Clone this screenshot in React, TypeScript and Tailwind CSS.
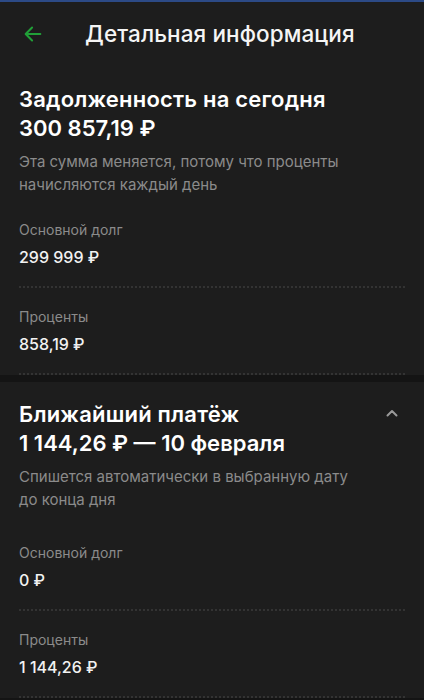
import React from "react";

type Row = { label: string; value: string };

function Dots() {
    return <div className="mx-[19px] border-b-2 border-dotted border-[#333333]" />;
}

function InfoRow({ row }: { row: Row }) {
    return (
        <div>
            <div className="px-[19px] pt-[19px] pb-[19px]">
                <div className="text-[14px] leading-[20px] text-[#8b8b8b]">{row.label}</div>
                <div className="mt-[7px] text-[16px] leading-[20px] font-medium text-[#f2f2f2]">{row.value}</div>
            </div>
            <Dots />
        </div>
    );
}

function Section({
    title,
    amount,
    note,
    rows,
    collapsible,
}: {
    title: string;
    amount: string;
    note: string;
    rows: Row[];
    collapsible?: boolean;
}) {
    return (
        <section className="bg-[#1d1d1d]">
            <div className="relative px-[19px]">
                <h2 className="text-[22px] leading-[29px] font-semibold text-white tracking-[0.2px]">{title}</h2>
                <div className="text-[22px] leading-[29px] font-semibold text-white">{amount}</div>
                <p className={`mt-[7px] pr-[40px] text-[15px] leading-[23px] text-[#8b8b8b] ${collapsible ? "-mt-[1px]" : ""}`}>{note}</p>
                {collapsible && (
                    <svg
                        className="absolute right-[25px] top-[6px]"
                        width="14"
                        height="14"
                        viewBox="0 0 14 14"
                        fill="none"
                        stroke="#9a9a9a"
                        strokeWidth="2"
                        strokeLinecap="round"
                        strokeLinejoin="round"
                    >
                        <path d="M2.5 9.5 7 5l4.5 4.5" />
                    </svg>
                )}
            </div>
            <div className={collapsible ? "mt-[13px]" : "mt-[5px]"}>
                {rows.map((r, i) => (
                    <InfoRow key={i} row={r} />
                ))}
            </div>
        </section>
    );
}

export default function App() {
    return (
        <div className="w-[424px] h-[700px] overflow-hidden bg-[#1d1d1d] font-['Inter',sans-serif]">
            <div className="h-[2px] bg-[#2c4a86]" />
            {/* Header */}
            <header className="flex items-center h-[64px] px-[22px]">
                <svg width="22" height="22" viewBox="0 0 24 24" fill="none" stroke="#21a038" strokeWidth="2.2" strokeLinecap="round" strokeLinejoin="round">
                    <path d="M20 12H5" />
                    <path d="M11 5l-7 7 7 7" />
                </svg>
                <h1 className="ml-[41px] text-[22.5px] font-medium text-[#f5f5f5] tracking-[0.1px]">Детальная информация</h1>
            </header>

            <div className="pt-[19px]">
                <Section
                    title="Задолженность на сегодня"
                    amount="300 857,19 ₽"
                    note="Эта сумма меняется, потому что проценты начисляются каждый день"
                    rows={[
                        { label: "Основной долг", value: "299 999 ₽" },
                        { label: "Проценты", value: "858,19 ₽" },
                    ]}
                />
                <div className="h-[7px] bg-[#141414]" />
                <div className="pt-[18px]">
                    <Section
                        title="Ближайший платёж"
                        amount="1 144,26 ₽ — 10 февраля"
                        note="Спишется автоматически в выбранную дату до конца дня"
                        collapsible
                        rows={[
                            { label: "Основной долг", value: "0 ₽" },
                            { label: "Проценты", value: "1 144,26 ₽" },
                        ]}
                    />
                </div>
                <div className="h-[7px] bg-[#141414]" />
            </div>
        </div>
    );
}
